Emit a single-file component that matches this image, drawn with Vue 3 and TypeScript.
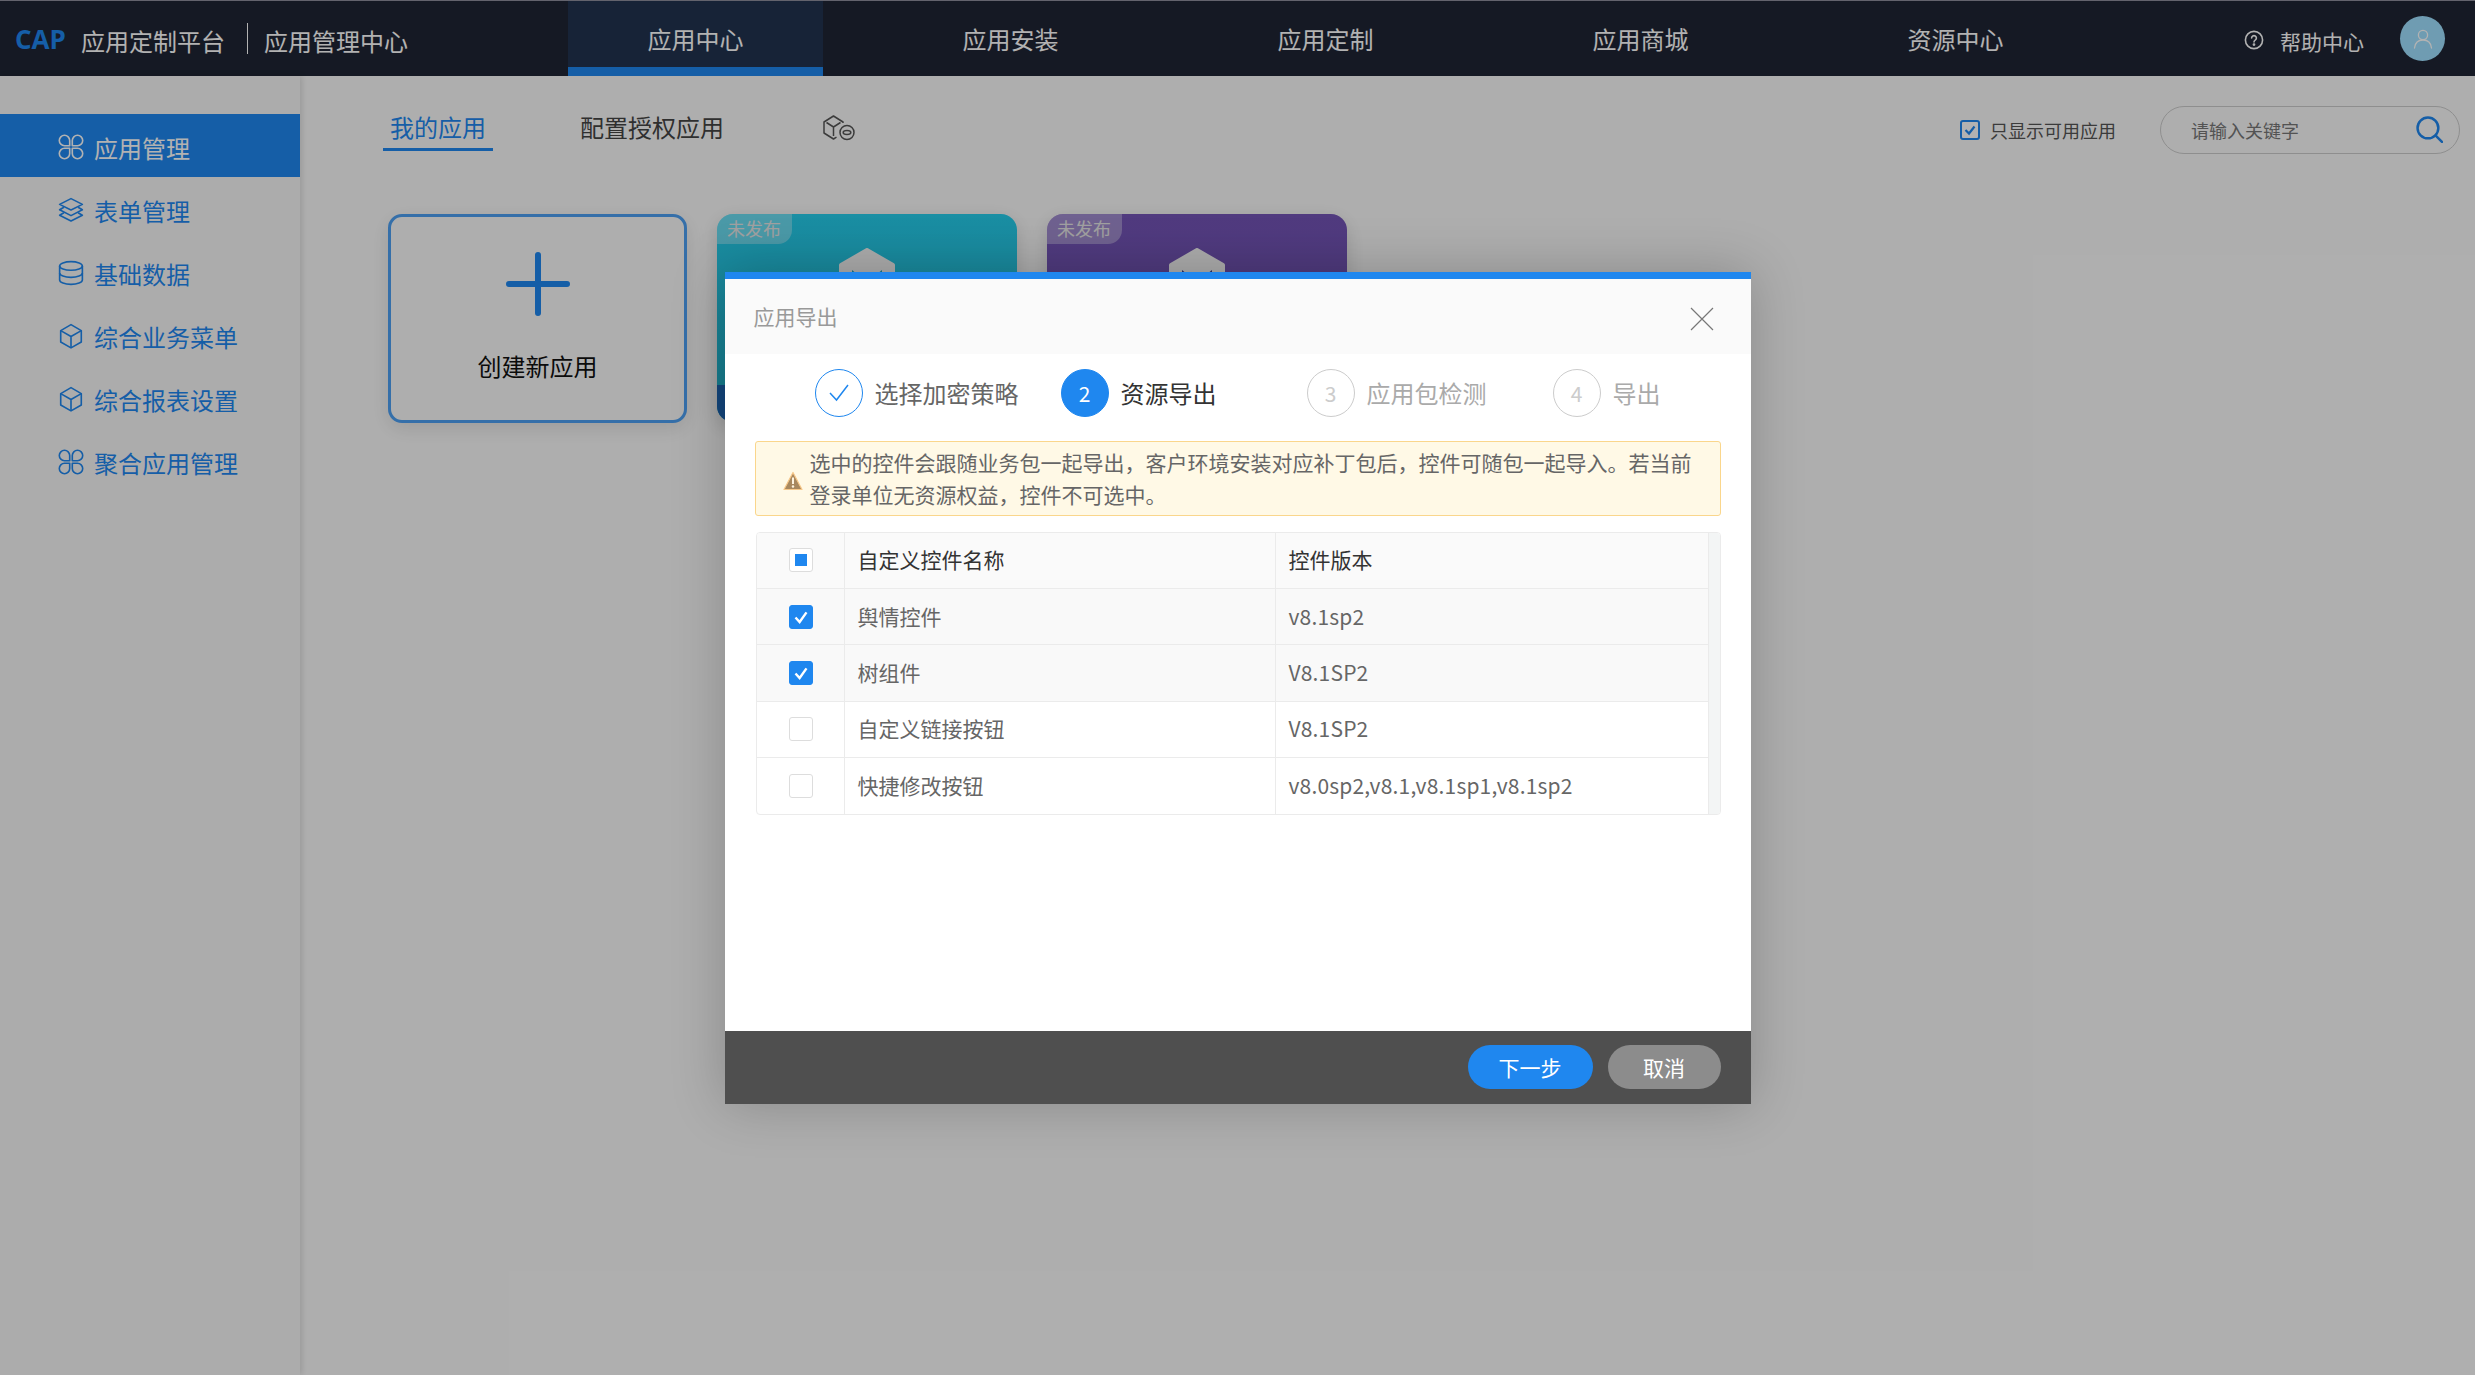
<script setup lang="ts">
const navItems: string[] = ['应用中心', '应用安装', '应用定制', '应用商城', '资源中心']
const sideItems: { label: string; icon: string }[] = [
  { label: '应用管理', icon: 'command' },
  { label: '表单管理', icon: 'layers' },
  { label: '基础数据', icon: 'db' },
  { label: '综合业务菜单', icon: 'box' },
  { label: '综合报表设置', icon: 'box' },
  { label: '聚合应用管理', icon: 'command' },
]
const cards: string[] = ['teal', 'purple']
const steps: { label: string; state: string; n: number }[] = [
  { label: '选择加密策略', state: 'done', n: 1 },
  { label: '资源导出', state: 'active', n: 2 },
  { label: '应用包检测', state: 'todo', n: 3 },
  { label: '导出', state: 'todo', n: 4 },
]
const rows: { name: string; version: string; checked: boolean }[] = [
  { name: '舆情控件', version: 'v8.1sp2', checked: true },
  { name: '树组件', version: 'V8.1SP2', checked: true },
  { name: '自定义链接按钮', version: 'V8.1SP2', checked: false },
  { name: '快捷修改按钮', version: 'v8.0sp2,v8.1,v8.1sp1,v8.1sp2', checked: false },
]
</script>

<template>
  <div class="page">
    <header class="topbar">
      <div class="brand">
        <span class="cap">CAP</span>
        <span class="brand-name">应用定制平台</span>
        <span class="brand-sep"></span>
        <span class="brand-name">应用管理中心</span>
      </div>
      <nav class="nav">
        <a v-for="(n, i) in navItems" :key="n" class="nav-item" :class="{ on: i === 0 }">{{ n }}</a>
      </nav>
      <div class="top-right">
        <svg class="help-icon" viewBox="0 0 20 20" fill="none" stroke="currentColor" stroke-width="1.6">
          <circle cx="10" cy="10" r="8.6" />
          <path d="M7.6 8a2.4 2.4 0 1 1 3.6 2.1c-.8.5-1.2.9-1.2 1.900" stroke-linecap="round" />
          <circle cx="10" cy="14.6" r=".6" fill="currentColor" />
        </svg>
        <span class="help-text">帮助中心</span>
        <span class="avatar">
          <svg viewBox="0 0 24 24" width="24" height="24" fill="none" stroke="currentColor" stroke-width="1.3">
            <circle cx="12" cy="8" r="4.6" />
            <path d="M3.5 21c.6-5 3.6-8 8.5-8s7.900 3 8.500 8" stroke-linecap="round" />
          </svg>
        </span>
      </div>
    </header>

    <div class="body">
      <aside class="sidebar">
        <a v-for="(s, i) in sideItems" :key="s.label" class="side-item" :class="{ on: i === 0 }">
          <svg class="side-icon" viewBox="0 0 24 24" fill="none" stroke="currentColor" stroke-width="1.500" stroke-linejoin="round">
            <template v-if="s.icon === 'command'">
              <path d="M10.800 10.800H6a4.800 4.800 0 1 1 4.800-4.800Z" />
              <path d="M13.200 10.800V6A4.800 4.800 0 1 1 18 10.800Z" />
              <path d="M10.800 13.200V18A4.800 4.800 0 1 1 6 13.200Z" />
              <path d="M13.200 13.200H18A4.800 4.800 0 1 1 13.200 18Z" />
            </template>
            <template v-else-if="s.icon === 'layers'">
              <path d="M12 1.500 22.500 6.800 12 12 1.500 6.800Z" />
              <path d="M5.500 9.500 1.500 11.800 12 17.200 22.500 11.800 18.500 9.500" />
              <path d="M5.500 14.500 1.500 16.800 12 22.200 22.500 16.800 18.500 14.500" />
            </template>
            <template v-else-if="s.icon === 'db'">
              <ellipse cx="12" cy="5.500" rx="10.500" ry="4" />
              <path d="M1.500 5.500v13c0 2.200 4.700 4 10.500 4s10.500-1.800 10.500-4v-13" />
              <path d="M1.500 12c0 2.200 4.700 4 10.500 4s10.500-1.800 10.500-4" />
            </template>
            <template v-else>
              <path d="M12 1.500 21.500 7v10.500L12 23 2.500 17.500V7Z" />
              <path d="M2.500 7 12 12.500 21.500 7M12 12.500V23" />
            </template>
          </svg>
          <span>{{ s.label }}</span>
        </a>
      </aside>

      <main class="main">
        <div class="main-head">
          <div class="tabs">
            <a class="tab on">我的应用</a>
            <a class="tab">配置授权应用</a>
            <a class="tab tab-icon">
              <svg viewBox="0 0 32 26" width="32" height="26" fill="none" stroke="#555" stroke-width="1.500" stroke-linejoin="round">
                <path d="M20 8V7L10.500 1 1 7v11l9.500 6 3-1.800" />
                <path d="M3.500 7.500l7 4.500 7-4.500M10.500 12v9" />
                <circle cx="24" cy="17.500" r="7" />
                <ellipse cx="24" cy="17.500" rx="3.800" ry="2" />
              </svg>
            </a>
          </div>
          <div class="tools">
            <label class="only">
              <span class="only-box">
                <svg viewBox="0 0 12 12" width="12" height="12" fill="none" stroke="#1f87ef" stroke-width="2.200"><path d="M1.500 6 5 9.500 10.500 2.500" /></svg>
              </span>
              <span>只显示可用应用</span>
            </label>
            <div class="search">
              <span class="placeholder">请输入关键字</span>
              <svg class="search-icon" viewBox="0 0 26 26" fill="none" stroke="#1f87ef" stroke-width="2.400" stroke-linecap="round">
                <circle cx="11.500" cy="11.500" r="10" />
                <path d="M19 19l6 6" />
              </svg>
            </div>
          </div>
        </div>

        <div class="cards">
          <div class="create">
            <svg viewBox="0 0 64 64" width="64" height="64" fill="none" stroke="#1f87ef" stroke-width="6" stroke-linecap="round">
              <path d="M32 3v58M3 32h58" />
            </svg>
            <span>创建新应用</span>
          </div>
          <div v-for="c in cards" :key="c" class="app-card" :class="c">
            <span class="badge">未发布</span>
            <svg class="hexagon" viewBox="0 0 56 64" width="56" height="64">
              <path d="M28 2 54 17V62H2V17Z" fill="#f5f5f5" stroke="#f5f5f5" stroke-width="4" stroke-linejoin="round" />
              <path class="notch" d="M13 22 28 34 43 22V44H13Z" />
            </svg>
            <div class="app-foot"></div>
          </div>
        </div>
      </main>
    </div>

    <div class="mask">
      <section class="modal">
        <div class="modal-head">
          <span>应用导出</span>
          <svg class="close" viewBox="0 0 24 24" width="24" height="24" fill="none" stroke="#777" stroke-width="1.200"><path d="M1 1l22 22M23 1 1 23" /></svg>
        </div>
        <div class="steps">
          <div v-for="s in steps" :key="s.n" class="step" :class="s.state">
            <span class="dot">
              <svg v-if="s.state === 'done'" viewBox="0 0 24 24" width="24" height="24" fill="none" stroke="#1f87ef" stroke-width="1.500"><path d="M3 12l6.500 7L21 4" /></svg>
              <template v-else>{{ s.n }}</template>
            </span>
            <span class="step-label">{{ s.label }}</span>
          </div>
        </div>
        <div class="alert">
          <svg class="alert-icon" viewBox="0 0 20 20" width="20" height="20">
            <path d="M10 1.500 19 18.500H1Z" fill="#a8885f" stroke="#f7c88a" stroke-width="1.200" stroke-linejoin="round" />
            <path d="M10 6.500v6.500" stroke="#fdf3e0" stroke-width="2" />
            <circle cx="10" cy="15.500" r="1.200" fill="#fdf3e0" />
          </svg>
          <p>选中的控件会跟随业务包一起导出，客户环境安装对应补丁包后，控件可随包一起导入。若当前登录单位无资源权益，控件不可选中。</p>
        </div>
        <div class="table">
          <div class="row head">
            <div class="cell check"><span class="box half"><i></i></span></div>
            <div class="cell">自定义控件名称</div>
            <div class="cell">控件版本</div>
            <div class="gutter"></div>
          </div>
          <div v-for="r in rows" :key="r.name" class="row" :class="{ sel: r.checked }">
            <div class="cell check">
              <span class="box" :class="{ ticked: r.checked }">
                <svg v-if="r.checked" viewBox="0 0 24 24" width="24" height="24" fill="none" stroke="#fff" stroke-width="2.600"><path d="M6 12.500l4.500 5L18 7" /></svg>
              </span>
            </div>
            <div class="cell">{{ r.name }}</div>
            <div class="cell ver">{{ r.version }}</div>
            <div class="gutter"></div>
          </div>
        </div>
        <div class="modal-foot">
          <button class="btn primary">下一步</button>
          <button class="btn ghost">取消</button>
        </div>
      </section>
    </div>
  </div>
</template>

<style>
html, body { margin: 0; padding: 0; background: #fafafa; }
</style>

<style scoped>
.page {
  position: relative;
  height: 1375px;
  overflow: hidden;
  display: flex;
  flex-direction: column;
  background: #fafafa;
  font-family: "Noto Sans CJK SC", "Liberation Sans", sans-serif;
  font-size: 24px;
  color: #333;
}
.topbar {
  flex: none;
  height: 76px;
  box-sizing: border-box;
  border-top: 1px solid #8f8f9c;
  background: #1f2534;
  display: flex;
  color: #fff;
}
.brand {
  width: 568px;
  flex: none;
  box-sizing: border-box;
  padding: 4px 0 0 15px;
  display: flex;
  align-items: center;
}
.cap {
  font-family: "Open Sans", "Liberation Sans", sans-serif;
  font-weight: 700;
  font-size: 26px;
  color: #1f87ef;
  width: 66px;
  margin-top: -4px;
}
.brand-sep {
  width: 1px;
  height: 31px;
  background: #fff;
  margin: -4px 16px 0 22px;
}
.nav { display: flex; gap: 60px; }
.nav-item {
  width: 255px;
  height: 75px;
  line-height: 75px;
  text-align: center;
}
.nav-item.on {
  background: #213350;
  box-shadow: inset 0 -9px 0 #1f87ef;
}
.top-right {
  margin-left: auto;
  padding: 4px 30px 0 0;
  display: flex;
  align-items: center;
  font-size: 21px;
}
.help-icon { width: 20px; height: 20px; margin-top: -2px; }
.help-text { margin: 0 36px 0 16px; }
.avatar {
  width: 45px;
  height: 45px;
  margin-top: -4px;
  border-radius: 50%;
  background: #9fe0ff;
  display: flex;
  align-items: center;
  justify-content: center;
}
.body { flex: 1; display: flex; min-height: 0; }
.sidebar {
  width: 300px;
  flex: none;
  padding-top: 38px;
  background: #f7f7f7;
  box-shadow: 2px 0 6px rgba(0, 0, 0, .12);
  color: #1f87ef;
}
.side-item {
  height: 63px;
  box-sizing: border-box;
  padding: 3px 0 0 58px;
  display: flex;
  align-items: center;
  gap: 10px;
}
.side-item.on { background: #1f87ef; color: #fff; }
.side-icon { width: 26px; height: 26px; margin-top: -1px; }
.main { flex: 1; padding-top: 27px; min-width: 0; }
.main-head { display: flex; justify-content: space-between; padding: 0 15px 0 83px; }
.tabs { display: flex; gap: 80px; }
.tab {
  height: 48px;
  box-sizing: border-box;
  padding: 0 7px;
  line-height: 48px;
  color: #444;
}
.tab.on { color: #1f87ef; border-bottom: 3px solid #1f87ef; }
.tab-icon { padding: 12px 12px 0; line-height: 0; }
.tools { display: flex; align-items: center; gap: 44px; height: 48px; margin-top: 3px; }
.only { display: flex; align-items: center; gap: 10px; font-size: 18px; color: #555; }
.only-box {
  width: 20px;
  height: 20px;
  box-sizing: border-box;
  border: 2px solid #1f87ef;
  border-radius: 3px;
  background: #fff;
  display: flex;
  align-items: center;
  justify-content: center;
}
.search {
  width: 300px;
  height: 48px;
  box-sizing: border-box;
  border: 1px solid #ccc;
  border-radius: 24px;
  padding: 0 16px 0 30px;
  display: flex;
  align-items: center;
  justify-content: space-between;
  font-size: 18px;
  color: #777;
}
.search-icon { width: 27px; height: 27px; margin-top: -2px; }
.cards { display: flex; gap: 30px; margin: 60px 0 0 88px; }
.create {
  width: 299px;
  height: 209px;
  box-sizing: border-box;
  border: 3px solid #4da0f2;
  border-radius: 14px;
  background: #fafafa;
  box-shadow: 0 6px 20px rgba(0, 0, 0, .1);
  display: flex;
  flex-direction: column;
  align-items: center;
  padding-top: 35px;
  color: #111;
}
.create span { margin-top: 32px; }
.app-card {
  position: relative;
  width: 300px;
  height: 208px;
  border-radius: 16px;
  overflow: hidden;
  box-shadow: 0 6px 20px rgba(0, 0, 0, .15);
  display: flex;
  flex-direction: column;
  align-items: center;
}
.teal { background: linear-gradient(#26cdeb, #20a9c0); }
.purple { background: linear-gradient(#7455b7, #6a4caa); }
.badge {
  position: absolute;
  left: 0;
  top: 0;
  width: 75px;
  height: 30px;
  padding-left: 10px;
  box-sizing: border-box;
  border-bottom-right-radius: 14px;
  background: rgba(255, 255, 255, .32);
  color: #e5e5e5;
  font-size: 18px;
  line-height: 28px;
}
.hexagon { margin-top: 34px; flex: none; }
.teal .notch { fill: #20a9c0; }
.purple .notch { fill: #3a3f8f; }
.app-foot { margin-top: auto; width: 100%; height: 37px; background: #1c64b0; }
.purple .app-foot { background: #5a3d9f; }
.mask {
  position: absolute;
  inset: 0;
  background: rgba(0, 0, 0, .3);
  display: flex;
  align-items: center;
  justify-content: center;
}
.modal {
  width: 1026px;
  height: 832px;
  box-sizing: border-box;
  border-top: 7px solid #1f87ef;
  background: #fff;
  box-shadow: 0 0 50px rgba(0, 0, 0, .22);
  display: flex;
  flex-direction: column;
}
.modal-head {
  height: 75px;
  flex: none;
  background: #fafafa;
  padding: 0 37px 0 29px;
  display: flex;
  align-items: center;
  justify-content: space-between;
  box-sizing: border-box;
  font-size: 21px;
  color: #999;
}
.close { margin-top: 6px; }
.steps {
  flex: none;
  display: grid;
  grid-template-columns: repeat(4, 246px);
  padding: 15px 0 0 90px;
}
.step { display: flex; align-items: center; gap: 12px; font-size: 24px; }
.dot {
  width: 48px;
  height: 48px;
  box-sizing: border-box;
  border-radius: 50%;
  border: 1px solid #ccc;
  color: #ccc;
  font-size: 21px;
  display: flex;
  align-items: center;
  justify-content: center;
}
.step.done .dot { border-color: #1f87ef; }
.step.done .step-label { color: #666; }
.step.active .dot { background: #1f87ef; border-color: #1f87ef; color: #fff; }
.step.active .step-label { color: #333; }
.step.todo .step-label { color: #aaa; }
.alert {
  flex: none;
  height: 75px;
  box-sizing: border-box;
  margin: 24px 30px 0 30px;
  border: 1px solid #fad68c;
  border-radius: 3px;
  background: #fff9e6;
  display: flex;
  align-items: center;
  padding: 0 20px 0 27px;
}
.alert-icon { flex: none; margin-top: 5px; }
.alert p {
  margin: 0 0 0 7px;
  font-size: 21px;
  line-height: 32px;
  color: #666;
}
.table {
  flex: none;
  margin: 16px 30px 0 31px;
  border: 1px solid #ebebeb;
  border-radius: 4px;
  overflow: hidden;
}
.row {
  display: grid;
  grid-template-columns: 88px 431px 433px 1fr;
  height: 56.4px;
  box-sizing: border-box;
  border-bottom: 1px solid #ebebeb;
  font-size: 21px;
  color: #666;
}
.row:last-child { border-bottom: none; }
.row.head { background: #fafafa; color: #333; }
.row.sel { background: #f9f9f9; }
.cell {
  display: flex;
  align-items: center;
  padding: 0 0 2px 13px;
  border-right: 1px solid #ebebeb;
}
.ver { letter-spacing: .18px; }
.cell.check { padding: 0 0 0 32px; }
.gutter { background: #f3f5f5; margin-bottom: -1px; }
.box {
  width: 24px;
  height: 24px;
  box-sizing: border-box;
  border: 1px solid #ddd;
  border-radius: 3px;
  background: #fff;
  display: flex;
  align-items: center;
  justify-content: center;
}
.box.ticked { background: #1f87ef; border-color: #1f87ef; }
.box i { width: 12px; height: 12px; background: #1f87ef; }
.modal-foot {
  margin-top: auto;
  flex: none;
  height: 73px;
  background: #4f4f4f;
  padding: 14px 30px 0 0;
  box-sizing: border-box;
  display: flex;
  justify-content: flex-end;
  gap: 15px;
}
.btn {
  height: 44px;
  border: none;
  border-radius: 22px;
  color: #fff;
  font-family: inherit;
  font-size: 21px;
  padding: 0;
}
.btn.primary { width: 125px; background: #1f87ef; }
.btn.ghost { width: 113px; background: #8c8c8c; }
</style>
